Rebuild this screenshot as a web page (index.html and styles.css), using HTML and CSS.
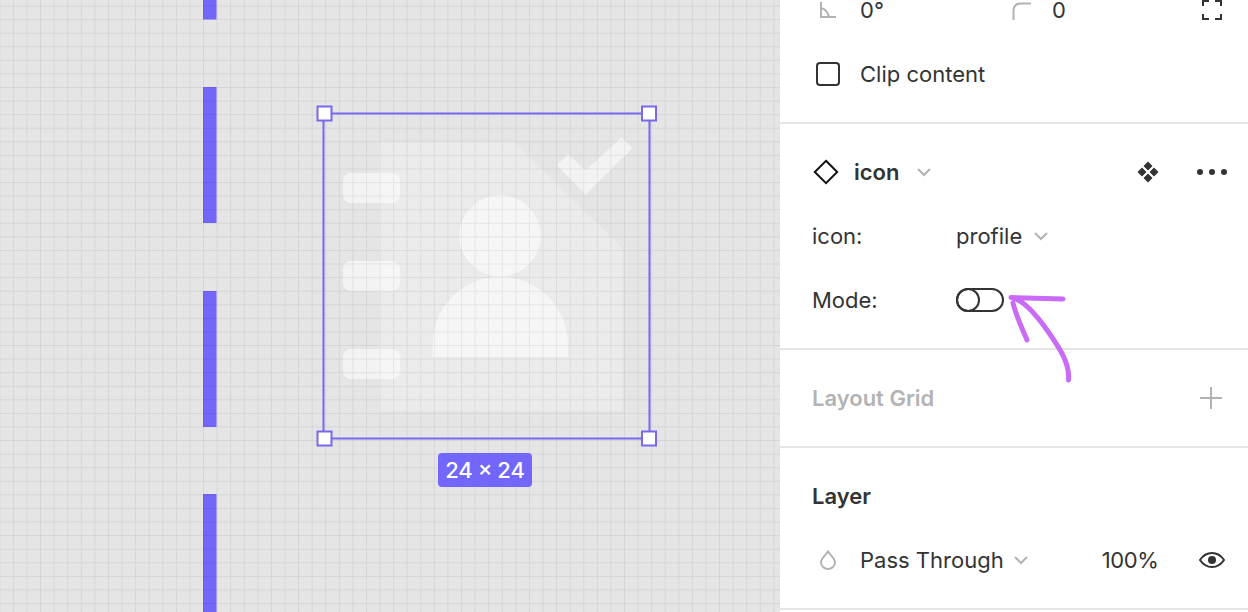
FILE: index.html
```html
<!DOCTYPE html>
<html>
<head>
	<meta charset="utf-8" />
	<title>Component properties</title>
	<link rel="stylesheet" href="styles.css">
</head>
<body>
<div class="page">
	<!-- canvas -->
	<div class="canvas">
		<svg class="canvasArt" width="780" height="612" viewBox="0 0 780 612">
			<defs>
				<pattern id="pixelGrid" patternUnits="userSpaceOnUse" x="-0.7" y="5.5" width="13.58" height="13.58">
					<rect x="0" y="0" width="13.58" height="1" fill="#000" fill-opacity="0.065" />
					<rect x="0" y="1" width="1" height="12.58" fill="#000" fill-opacity="0.065" />
				</pattern>
			</defs>
			<!-- guides -->
			<g fill="#7366fb">
				<rect x="203" y="0" width="13.5" height="19.5" />
				<rect x="203" y="87" width="13.5" height="136" />
				<rect x="203" y="291" width="13.5" height="136" />
				<rect x="203" y="494" width="13.5" height="118" />
			</g>
			<!-- icon -->
			<path d="M379 142H514L622 248V411H379Z" fill="#fff" fill-opacity="0.25" />
			<g fill="#fff" fill-opacity="0.55">
				<path d="M556.7 165L568 154.3L585.7 170.3L621.7 137.3L632.3 148.3L585.7 194.7Z" />
				<rect x="343" y="173" width="57" height="30" rx="8" />
				<rect x="343" y="261" width="57" height="30" rx="8" />
				<rect x="343" y="349" width="57" height="30" rx="8" />
				<circle cx="500" cy="235.7" r="40.7" />
				<path d="M432.5 357V344.5A67.5 67.5 0 0 1 568 344.5V357Z" />
			</g>
			<rect x="0" y="0" width="780" height="612" fill="url(#pixelGrid)" />
			<!-- selection -->
			<rect x="323.5" y="113.5" width="326" height="325" fill="none" stroke="#7669ec" stroke-width="2" />
			<g fill="#fff" stroke="#7669ec" stroke-width="2">
				<rect x="317.5" y="106.5" width="14" height="14" />
				<rect x="642" y="106.5" width="14" height="14" />
				<rect x="317.5" y="431.5" width="14" height="14" />
				<rect x="642" y="431.5" width="14" height="14" />
			</g>
		</svg>
		<div class="sizeTag">24 × 24</div>
	</div>

	<!-- panneau droit -->
	<div class="panel">
		<div class="section">
			<div class="row">
				<span class="slot">
					<svg width="18" height="20" viewBox="0 0 18 20"><path d="M2 2V17H17M2 8C6 9 9 12 10 17" class="grayLine" /></svg>
				</span>
				<span class="cellValue">0°</span>
				<span class="slot slotCorner">
					<svg width="20" height="20" viewBox="0 0 20 20"><path d="M1.5 20V11Q1.5 3.500 9 3.500H19" class="grayLine" /></svg>
				</span>
				<span>0</span>
				<svg class="rowEnd" width="20" height="20" viewBox="0 0 20 20"><path d="M1 6V1H7M13 1H19V6M19 14V19H13M7 19H1V14" class="darkLine" /></svg>
			</div>
			<div class="row">
				<span class="slot"><span class="checkbox"></span></span>
				<span>Clip content</span>
			</div>
		</div>

		<div class="section">
			<div class="row">
				<span class="slotDiamond">
					<svg width="26" height="26" viewBox="0 0 26 26"><path d="M13 1.800L24.200 13L13 24.200L1.800 13Z" fill="none" stroke="#111" stroke-width="2" /></svg>
				</span>
				<strong>icon</strong>
				<svg class="chevron chevronTitle" width="14" height="9" viewBox="0 0 14 9"><path d="M1 1L7 7L13 1" class="grayLine" /></svg>
				<span class="rowActions">
					<svg width="24" height="24" viewBox="0 0 24 24" fill="#333"><path d="M12 1.500L16.500 6L12 10.500L7.500 6ZM6 7.500L10.500 12L6 16.500L1.500 12ZM18 7.500L22.500 12L18 16.500L13.500 12ZM12 13.500L16.500 18L12 22.500L7.500 18Z" /></svg>
					<svg width="30" height="6" viewBox="0 0 30 6" fill="#333"><circle cx="3" cy="3" r="3" /><circle cx="15" cy="3" r="3" /><circle cx="27" cy="3" r="3" /></svg>
				</span>
			</div>
			<div class="row">
				<span class="propName">icon:</span>
				<span>profile</span>
				<svg class="chevron" width="14" height="9" viewBox="0 0 14 9"><path d="M1 1L7 7L13 1" class="grayLine" /></svg>
			</div>
			<div class="row">
				<span class="propName">Mode:</span>
				<span class="toggle"><span class="toggleKnob"></span></span>
			</div>
		</div>

		<div class="section">
			<div class="row">
				<strong class="muted">Layout Grid</strong>
				<svg class="rowEnd" width="22" height="22" viewBox="0 0 22 22"><path d="M11 0V22M0 11H22" class="grayLine" /></svg>
			</div>
		</div>

		<div class="section">
			<div class="row"><strong>Layer</strong></div>
			<div class="row">
				<span class="slot">
					<svg width="18" height="20" viewBox="0 0 18 20"><path d="M9 1.500C11 5 16 8 16 12.500A7 6.500 0 0 1 2 12.500C2 8 7 5 9 1.500Z" class="grayLine" /></svg>
				</span>
				<span>Pass Through</span>
				<svg class="chevron chevronBlend" width="14" height="9" viewBox="0 0 14 9"><path d="M1 1L7 7L13 1" class="grayLine" /></svg>
				<span class="opacity">100%</span>
				<svg class="rowEnd eye" width="26" height="16" viewBox="0 0 26 16"><path d="M1 8C4 3.500 8 1 13 1S22 3.500 25 8C22 12.500 18 15 13 15S4 12.500 1 8Z" class="darkLine" /><circle cx="13" cy="8" r="4" fill="#333" /></svg>
			</div>
		</div>

		<!-- annotation -->
		<svg class="scribble" width="468" height="612" viewBox="0 0 468 612">
			<path d="M283 299L231 297.500C242 299 255 313 267 330C278 346 290 362 288.500 380M233 303C236 316 243 330 247 340" fill="none" stroke="#c96bf6" stroke-width="5" stroke-linecap="round" stroke-linejoin="round" />
		</svg>
	</div>
</div>
</body>
</html>
```
FILE: styles.css
```css
html, body{
	margin: 0;
	padding: 0;
	overflow: hidden;
}
body{
	font-family: Inter, "Liberation Sans", sans-serif;
	font-size: 22px;
	line-height: 20px;
	color: #333;
}
.page{
	display: flex;
	width: 1248px;
	height: 612px;
	overflow: hidden;
}
/* canvas */
.canvas{
	position: relative;
	flex: none;
	width: 780px;
	height: 612px;
	background-color: #e5e5e6;
}
.canvasArt{
	display: block;
}
.sizeTag{
	position: absolute;
	left: 438px;
	top: 453px;
	width: 94px;
	height: 34px;
	background-color: #7366fb;
	border-radius: 4px;
	color: #fff;
	font-weight: 500;
	line-height: 34px;
	text-align: center;
	white-space: nowrap;
	word-spacing: -1px;
}
/* panneau */
.panel{
	position: relative;
	flex: 1;
	background-color: #fff;
}
.section{
	display: flex;
	flex-direction: column;
	gap: 44px;
	padding: 38px 32px;
	border-bottom: 2px solid #e5e5e5;
}
.section:first-child{
	padding-top: 0;
}
.row{
	display: flex;
	align-items: center;
	height: 20px;
	white-space: nowrap;
}
strong{
	font-weight: 600;
}
.muted{
	color: #b3b3b3;
}
.slot{
	display: flex;
	justify-content: center;
	flex: none;
	width: 32px;
	margin-right: 16px;
}
.slotCorner{
	justify-content: flex-start;
	width: 20px;
	margin-right: 20px;
}
.slotDiamond{
	display: flex;
	flex: none;
	margin-left: 1px;
	margin-right: 15px;
}
.cellValue{
	width: 152px;
}
.grayLine{
	fill: none;
	stroke: #b3b3b3;
	stroke-width: 2;
}
.darkLine{
	fill: none;
	stroke: #333;
	stroke-width: 2;
}
.checkbox{
	display: block;
	box-sizing: border-box;
	width: 24px;
	height: 24px;
	border: 2px solid #333;
	border-radius: 4px;
}
.chevron{
	flex: none;
	margin-left: 12px;
}
.chevronTitle{
	margin-left: 18px;
}
.chevronBlend{
	margin-left: 10px;
}
.rowEnd{
	flex: none;
	margin-left: auto;
	margin-right: -6px;
}
.eye{
	margin-right: -9px;
}
.rowActions{
	display: flex;
	align-items: center;
	gap: 37px;
	margin-left: auto;
	margin-right: -11px;
}
.propName{
	width: 144px;
}
.toggle{
	display: block;
	box-sizing: border-box;
	width: 48px;
	height: 24px;
	border: 2px solid #333;
	border-radius: 12px;
}
.toggleKnob{
	display: block;
	box-sizing: border-box;
	width: 24px;
	height: 24px;
	margin: -2px;
	border: 2px solid #333;
	border-radius: 50%;
}
.opacity{
	margin-left: 74px;
	letter-spacing: -0.4px;
}
/* annotation */
.scribble{
	position: absolute;
	left: 0;
	top: 0;
}
```
